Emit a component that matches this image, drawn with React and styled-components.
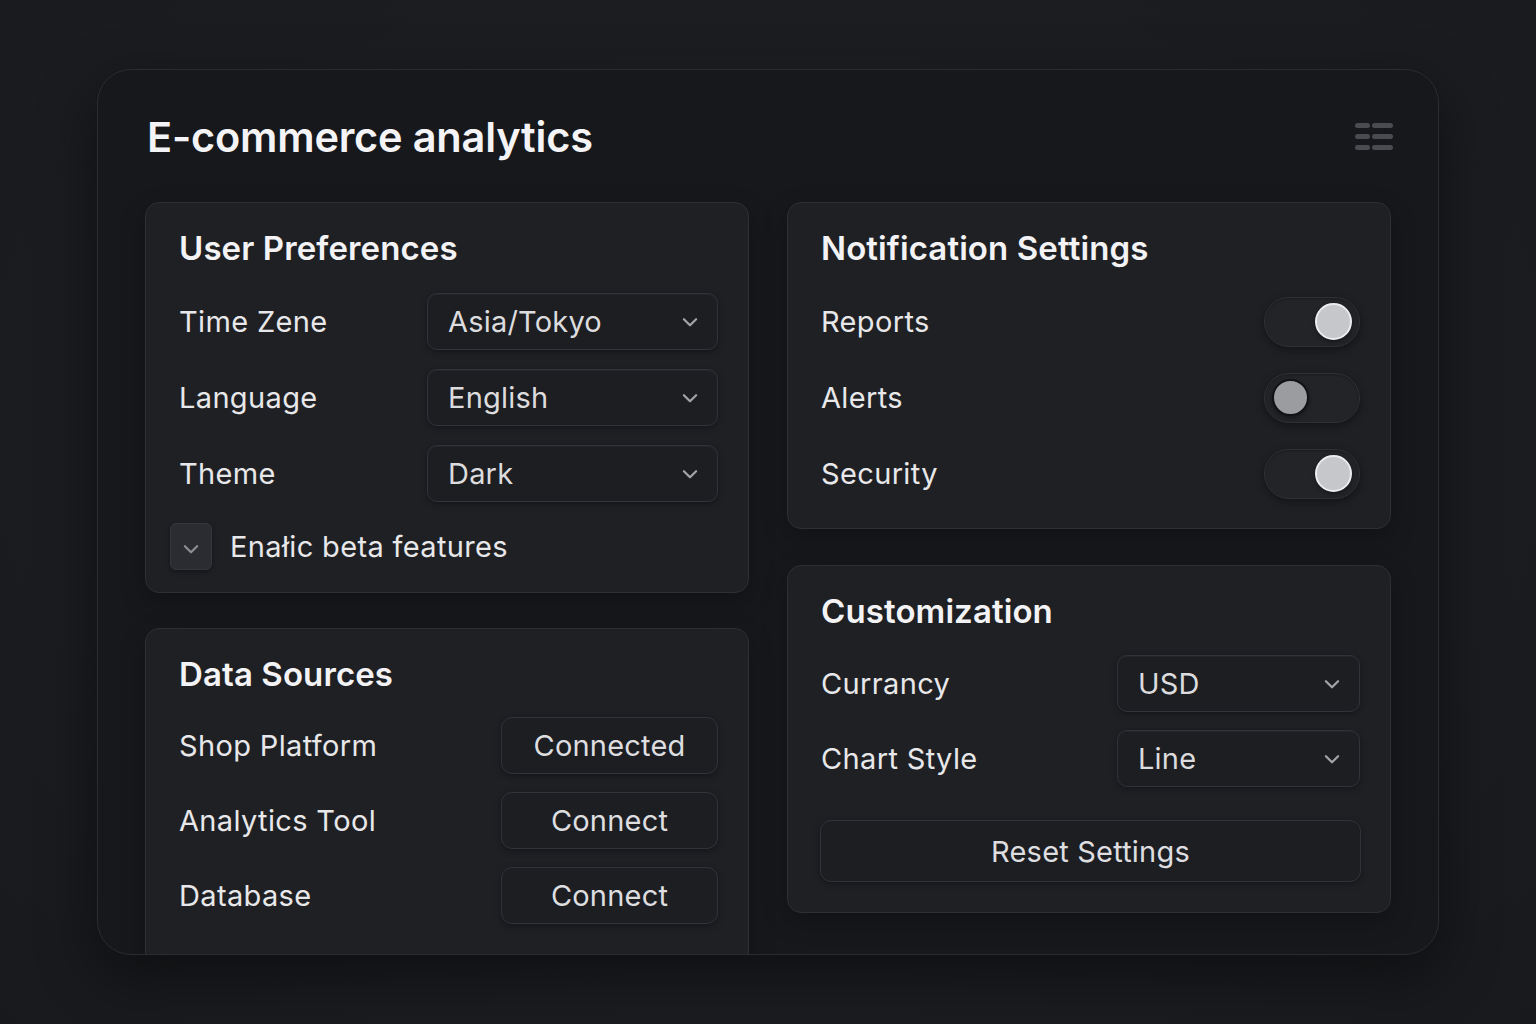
import React from "react";
import styled, { createGlobalStyle } from "styled-components";

const GlobalStyle = createGlobalStyle`
  html, body {
    margin: 0;
    padding: 0;
    background: #1c1d21;
    font-family: Inter, "Noto Sans", "Liberation Sans", sans-serif;
    color: #ececee;
  }
  * { box-sizing: border-box; }
`;

const Page = styled.div`
  width: 1536px;
  height: 1024px;
  padding: 69px 97px 0;
  background: radial-gradient(ellipse at 50% 40%, #1f2024 0%, #1b1c20 70%, #18191c 100%);
`;

const Panel = styled.div`
  height: 886px;
  background: #17181b;
  border: 1px solid #2b2c30;
  border-radius: 34px;
  padding: 38px 44px 0 47px;
  overflow: hidden;
  box-shadow: 0 20px 60px rgba(0, 0, 0, 0.45);
`;

const Header = styled.div`
  display: flex;
  align-items: center;
  justify-content: space-between;
  height: 60px;
  margin-bottom: 34px;
`;

const Title = styled.h1`
  margin: -2px 0 0 2px;
  font-size: 41.5px;
  font-weight: 600;
  letter-spacing: -0.2px;
  color: #f4f4f6;
`;

const Columns = styled.div`
  display: grid;
  grid-template-columns: 604px 604px;
  column-gap: 38px;
  align-items: start;
`;

const Column = styled.div`
  display: flex;
  flex-direction: column;
  gap: ${(p) => p.$gap}px;
`;

const Card = styled.section`
  background: #1f2024;
  border: 1px solid #2e2f34;
  border-radius: 14px;
  padding: 25px 30px ${(p) => p.$bottom ?? 24}px 33px;
  box-shadow: 0 8px 24px rgba(0, 0, 0, 0.25);
  display: flex;
  flex-direction: column;
  gap: ${(p) => p.$gap ?? 19}px;
  min-height: ${(p) => p.$minH || 0}px;
`;

const CardTitle = styled.h2`
  margin: 0 0 ${(p) => p.$after ?? 6}px;
  font-size: 33px;
  line-height: 40px;
  font-weight: 600;
  color: #f3f3f5;
  letter-spacing: 0.1px;
`;

const Row = styled.div`
  display: flex;
  align-items: center;
  justify-content: space-between;
  height: 57px;
`;

const Label = styled.span`
  font-size: 29px;
  letter-spacing: 0.35px;
  color: #e8e8ea;
`;

const SelectBox = styled.div`
  width: ${(p) => p.$w}px;
  height: 57px;
  display: flex;
  align-items: center;
  justify-content: space-between;
  padding: 0 17px 0 20px;
  background: #1d1e22;
  border: 1px solid #32333a;
  border-radius: 10px;
  box-shadow: 0 2px 6px rgba(0, 0, 0, 0.35), inset 0 1px 0 rgba(255, 255, 255, 0.03);
  font-size: 29px;
  letter-spacing: 0.2px;
  color: #dcdcde;
`;

const Chevron = ({ color = "#a3a4a8", size = 20 }) => (
  <svg width={size} height={size} viewBox="0 0 18 18" fill="none">
    <path d="M3.5 6.5 L9 12 L14.5 6.5" stroke={color} strokeWidth="2" strokeLinecap="round" strokeLinejoin="round" />
  </svg>
);

const Select = ({ value, w }) => (
  <SelectBox $w={w}>
    <span>{value}</span>
    <Chevron />
  </SelectBox>
);

const CheckRow = styled.div`
  display: flex;
  align-items: center;
  gap: 18px;
  margin: 2px 0 0 -9px;
  height: 47px;
`;

const CheckBox = styled.div`
  width: 42px;
  height: 47px;
  border-radius: 6px;
  background: #2b2c31;
  border: 1px solid #35363b;
  display: flex;
  align-items: center;
  justify-content: center;
  padding-top: 5px;
  box-shadow: 0 2px 5px rgba(0, 0, 0, 0.35);
`;

const Button = styled.button`
  width: ${(p) => p.$w || 217}px;
  height: ${(p) => p.$h || 57}px;
  background: #1d1e22;
  border: 1px solid #32333a;
  border-radius: 11px;
  box-shadow: 0 2px 6px rgba(0, 0, 0, 0.35);
  font-family: inherit;
  font-size: 29px;
  letter-spacing: 0.2px;
  color: #dedee0;
  cursor: pointer;
`;

const Track = styled.div`
  width: 96px;
  height: 50px;
  border-radius: 25px;
  background: #232428;
  border: 1px solid #303136;
  box-shadow: 0 3px 8px rgba(0, 0, 0, 0.4), inset 0 1px 2px rgba(0, 0, 0, 0.3);
  display: flex;
  align-items: center;
  justify-content: ${(p) => (p.$on ? "flex-end" : "flex-start")};
  padding: 0 7px;
`;

const Knob = styled.div`
  width: 37px;
  height: 37px;
  border-radius: 50%;
  background: ${(p) => (p.$on ? "#c6c7cb" : "#9b9ca0")};
  border: 2px solid ${(p) => (p.$on ? "#ececee" : "#111214")};
  box-shadow: 0 2px 4px rgba(0, 0, 0, 0.4);
`;

const Toggle = ({ on }) => (
  <Track $on={on}>
    <Knob $on={on} />
  </Track>
);

const MenuIcon = () => (
  <svg width="40" height="30" viewBox="0 0 40 30" style={{ marginTop: -5 }}>
    {[2, 13, 24].map((y) => (
      <g key={y} fill="#4a4b50">
        <rect x="1" y={y} width="15" height="5" rx="2.5" />
        <rect x="18" y={y} width="21" height="5" rx="2.5" />
      </g>
    ))}
  </svg>
);

export default function App() {
  return (
    <Page>
      <GlobalStyle />
      <Panel>
        <Header>
          <Title>E-commerce analytics</Title>
          <MenuIcon />
        </Header>
        <Columns>
          <Column $gap={35}>
            <Card $bottom={22}>
              <CardTitle>User Preferences</CardTitle>
              <Row>
                <Label>Time Zene</Label>
                <Select value="Asia/Tokyo" w={291} />
              </Row>
              <Row>
                <Label>Language</Label>
                <Select value="English" w={291} />
              </Row>
              <Row>
                <Label>Theme</Label>
                <Select value="Dark" w={291} />
              </Row>
              <CheckRow>
                <CheckBox>
                  <Chevron color="#8d8e93" size={20} />
                </CheckBox>
                <Label>Enałic beta features</Label>
              </CheckRow>
            </Card>
            <Card $gap={18} $minH={360}>
              <CardTitle $after={5}>Data Sources</CardTitle>
              <Row>
                <Label>Shop Platform</Label>
                <Button>Connected</Button>
              </Row>
              <Row>
                <Label>Analytics Tool</Label>
                <Button>Connect</Button>
              </Row>
              <Row>
                <Label>Database</Label>
                <Button>Connect</Button>
              </Row>
            </Card>
          </Column>
          <Column $gap={36}>
            <Card $bottom={26}>
              <CardTitle>Notification Settings</CardTitle>
              <Row>
                <Label>Reports</Label>
                <Toggle on />
              </Row>
              <Row>
                <Label>Alerts</Label>
                <Toggle />
              </Row>
              <Row>
                <Label>Security</Label>
                <Toggle on />
              </Row>
            </Card>
            <Card $gap={18} $bottom={30}>
              <CardTitle $after={6}>Customization</CardTitle>
              <Row>
                <Label>Currancy</Label>
                <Select value="USD" w={243} />
              </Row>
              <Row>
                <Label>Chart Style</Label>
                <Select value="Line" w={243} />
              </Row>
              <Button $w={541} $h={62} style={{ marginTop: 15, marginLeft: -1 }}>
                Reset Settings
              </Button>
            </Card>
          </Column>
        </Columns>
      </Panel>
    </Page>
  );
}
